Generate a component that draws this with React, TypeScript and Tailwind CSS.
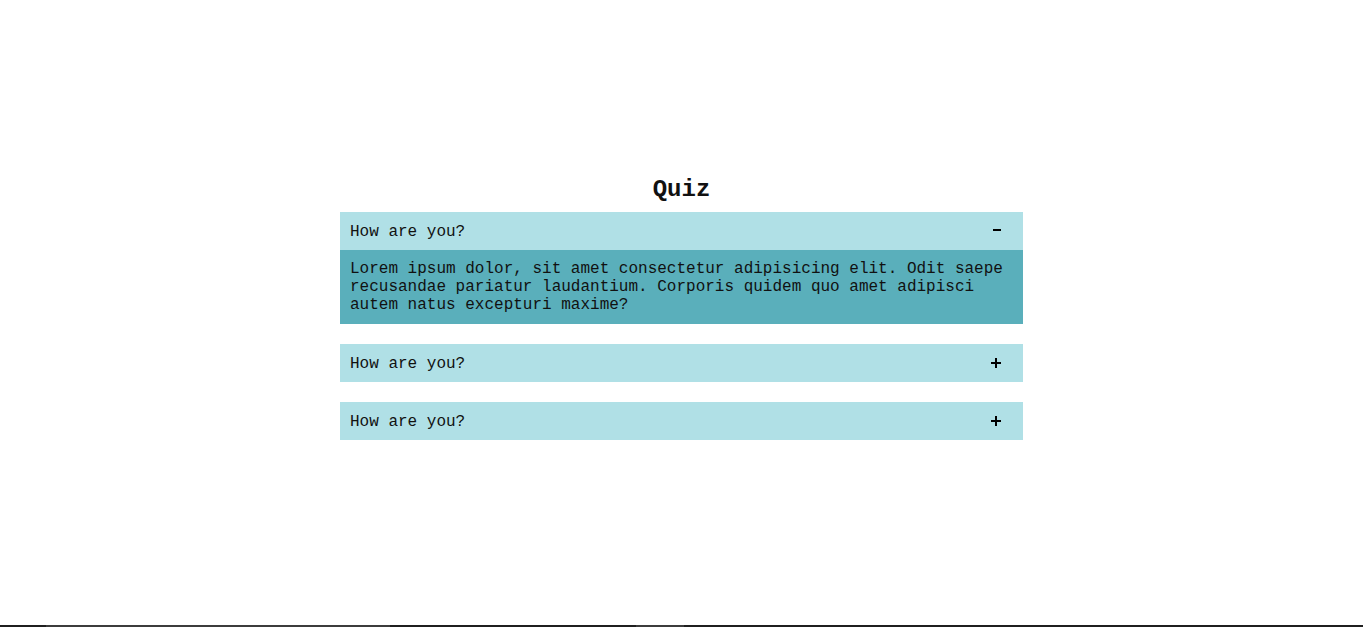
import { useState } from 'react'

const answer =
  'Lorem ipsum dolor, sit amet consectetur adipisicing elit. Odit saepe recusandae pariatur laudantium. Corporis quidem quo amet adipisci autem natus excepturi maxime?'

const items = [
  { q: 'How are you?', a: answer },
  { q: 'How are you?', a: answer },
  { q: 'How are you?', a: answer },
]

function Toggle({ open }: { open: boolean }) {
  return (
    <svg width="10" height="10" viewBox="0 0 10 10" className="shrink-0">
      {open ? (
        <rect x="2" y="3" width="8" height="2" fill="#000" />
      ) : (
        <>
          <rect x="0" y="4" width="10" height="2" fill="#000" />
          <rect x="4" y="0" width="2" height="10" fill="#000" />
        </>
      )}
    </svg>
  )
}

export default function App() {
  const [openIndex, setOpenIndex] = useState<number | null>(0)

  return (
    <div className="min-h-screen bg-white font-['Courier_New','Liberation_Mono',monospace] text-[#111]">
      <div className="mx-auto w-[683px] pt-[176px]">
        <h2 className="text-center text-[24px] font-bold leading-[27px]">Quiz</h2>

        <div className="mt-[9px] flex flex-col gap-5">
          {items.map((item, i) => {
            const open = openIndex === i
            return (
              <div key={i}>
                <button
                  onClick={() => setOpenIndex(open ? null : i)}
                  className="flex h-[38px] w-full items-center justify-between bg-[#b0e0e6] pl-[10px] pr-[22px] text-left text-[16px] leading-[18px]"
                >
                  <span className="pt-[2px]">{item.q}</span>
                  <Toggle open={open} />
                </button>
                {open && (
                  <div className="bg-[#5aafbb] px-[10px] py-[10px] text-[16px] leading-[18px]">
                    {item.a}
                  </div>
                )}
              </div>
            )
          })}
        </div>
      </div>

      {/* thin dark strip along the bottom edge */}
      <div className="fixed bottom-0 left-0 flex h-[2px] w-full bg-[#1f1f1f]">
        <div className="ml-[46px] w-[344px] bg-[#3c3c3c]" />
        <div className="ml-[246px] w-[48px] bg-[#3c3c3c]" />
      </div>
    </div>
  )
}
